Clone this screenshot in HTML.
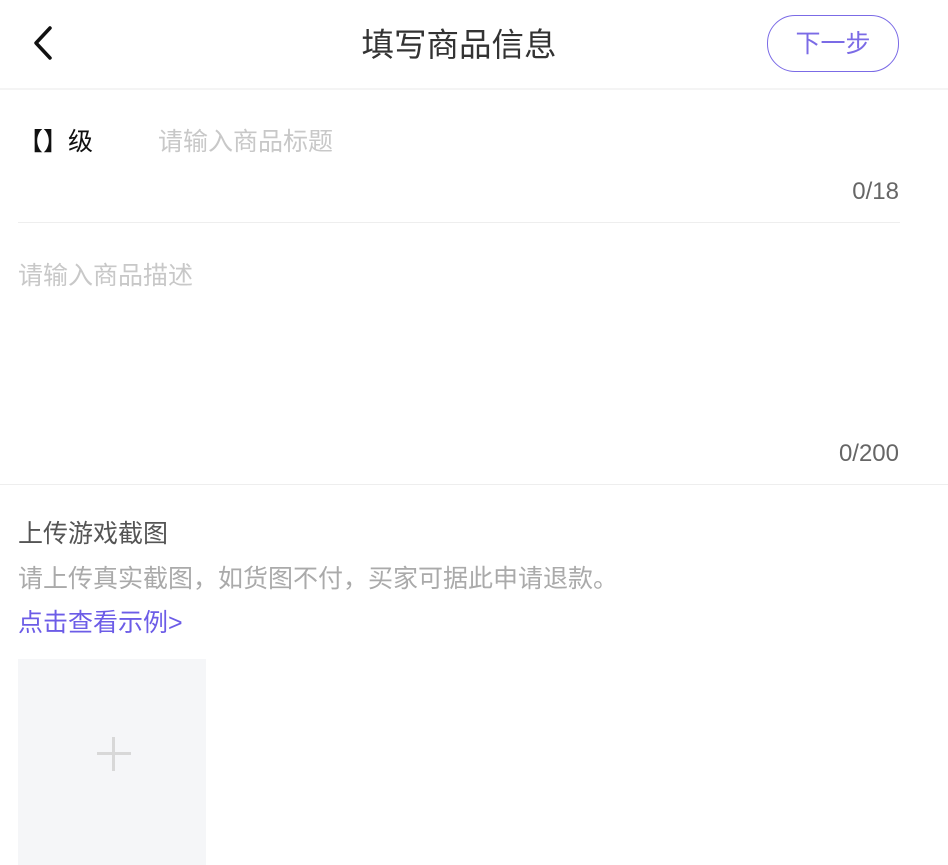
<!DOCTYPE html>
<html><head><meta charset="utf-8"><style>
body{margin:0;width:948px;height:865px;overflow:hidden;background:#fff;font-family:"Liberation Sans","Noto Sans CJK SC",sans-serif;position:relative}
.a{position:absolute;white-space:nowrap;line-height:1}
</style></head><body>
<svg class="a" style="left:28px;top:24px" width="30" height="38"><path d="M22 4 L8 19 L22 34" stroke="#111" stroke-width="3.5" fill="none" stroke-linecap="round" stroke-linejoin="round"/></svg>
<div class="a" style="left:0;width:918px;text-align:center;top:29px;font-size:32.5px;color:#333">填写商品信息</div>
<div class="a" style="left:767px;top:15px;width:130px;height:55px;border:1px solid #7b6be6;border-radius:28px;color:#7b6be6;font-size:25px;text-align:center;line-height:57px">下一步</div>
<div class="a" style="left:0;top:88px;width:948px;height:2px;background:#f4f4f4"></div>
<div class="a" style="left:18px;top:130px;font-size:25px;color:#111">【】级</div>
<div class="a" style="left:158px;top:130px;font-size:25px;color:#c8c8c8">请输入商品标题</div>
<div class="a" style="right:49px;top:180px;font-size:24px;color:#666">0/18</div>
<div class="a" style="left:18px;top:222px;width:882px;height:1px;background:#eee"></div>
<div class="a" style="left:18px;top:264px;font-size:25px;color:#c8c8c8">请输入商品描述</div>
<div class="a" style="right:49px;top:442px;font-size:24px;color:#666">0/200</div>
<div class="a" style="left:0;top:484px;width:948px;height:1px;background:#eee"></div>
<div class="a" style="left:18px;top:522px;font-size:25px;color:#555">上传游戏截图</div>
<div class="a" style="left:18px;top:567px;font-size:25px;color:#aaa">请上传真实截图，如货图不付，买家可据此申请退款。</div>
<div class="a" style="left:18px;top:611px;font-size:25px;color:#6c5ce7">点击查看示例&gt;</div>
<div class="a" style="left:18px;top:659px;width:188px;height:206px;background:#f5f6f8"></div>
<div class="a" style="left:97px;top:752px;width:34px;height:3px;background:#d8d8d8"></div>
<div class="a" style="left:112px;top:737px;width:3px;height:34px;background:#d8d8d8"></div>
</body></html>
